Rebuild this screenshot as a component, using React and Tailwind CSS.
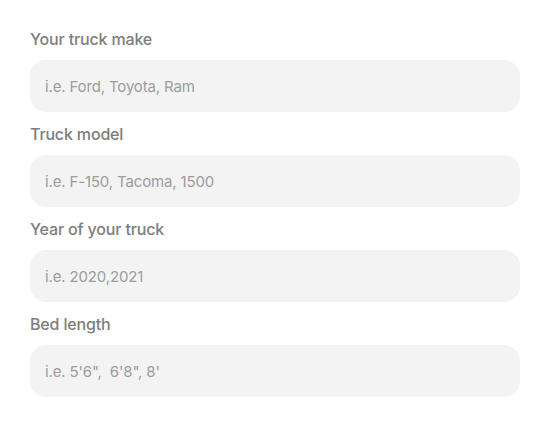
import React from "react";

const fields = [
  { label: "Your truck make", placeholder: "i.e. Ford, Toyota, Ram" },
  { label: "Truck model", placeholder: "i.e. F-150, Tacoma, 1500" },
  { label: "Year of your truck", placeholder: "i.e. 2020,2021" },
  { label: "Bed length", placeholder: "i.e. 5'6\",  6'8\", 8'" },
];

const App = () => {
  return (
    <div className="w-[550px] h-[427px] bg-white pt-[29px] px-[30px] font-['Inter',sans-serif]">
      <form className="flex flex-col gap-[12px] w-[490px]">
        {fields.map((f) => (
          <div key={f.label} className="flex flex-col">
            <label className="text-[16px] leading-[20px] font-medium tracking-[-0.01em] text-[#7d7d7d] mb-[11px]">
              {f.label}
            </label>
            <input
              type="text"
              placeholder={f.placeholder}
              className="h-[52px] w-full rounded-2xl bg-[#f3f3f3] px-[15px] text-[15px] tracking-[-0.01em] text-[#555] placeholder:text-[#9c9c9c] outline-none"
            />
          </div>
        ))}
      </form>
    </div>
  );
};

export default App;
